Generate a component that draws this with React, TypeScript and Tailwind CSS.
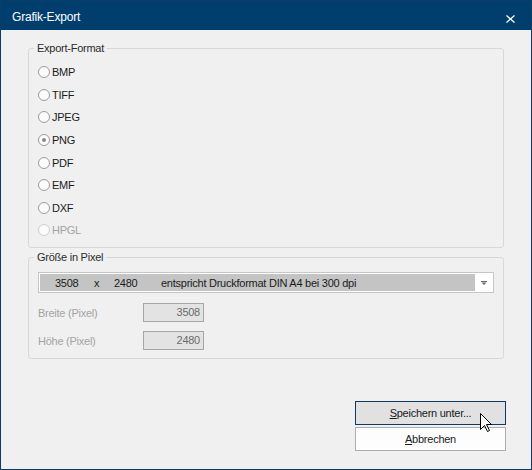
import React from 'react';

const formats = ['BMP', 'TIFF', 'JPEG', 'PNG', 'PDF', 'EMF', 'DXF', 'HPGL'];

const Radio: React.FC<{ label: string; checked?: boolean; disabled?: boolean }> = ({ label, checked, disabled }) => (
    <div className="h-[22.6px] flex items-center">
        <span
            className={`w-[12px] h-[12px] rounded-full border flex items-center justify-center bg-[#fbfbfb] ${
                disabled ? 'border-[#cfcfcf]' : 'border-[#9c9c9c]'
            }`}
        >
            {checked && <span className="w-[4px] h-[4px] rounded-full bg-[#8a8a8a]" />}
        </span>
        <span className={`ml-[2px] ${disabled ? 'text-[#a3a3a3]' : 'text-[#1b1b1b]'}`}>{label}</span>
    </div>
);

const App: React.FC = () => {
    return (
        <div className="w-[532px] h-[470px] relative bg-[#f0f0f0] border border-[#0c3d69] flex flex-col font-['Liberation_Sans',Arial,sans-serif] text-[11px] leading-[14px] tracking-[-0.25px] select-none">
            {/* title bar */}
            <div className="h-[29px] bg-[#003e6e] flex items-start justify-between pl-[11px] pr-[16px] pt-[9px] shrink-0">
                <span className="text-white text-[12px] tracking-[-0.2px]">Grafik-Export</span>
                <svg width="9" height="8" viewBox="0 0 9 8" className="mt-[5px]">
                    <path d="M0.5 0.5 L8.5 7.5 M8.5 0.5 L0.5 7.5" stroke="white" strokeWidth="1.3" />
                </svg>
            </div>

            <fieldset className="ml-[27px] mt-[11px] w-[476px] h-[207px] border border-[#d8d8d8] rounded-[3px] pl-[9px] pt-[6px]">
                <legend className="ml-[-4px] px-[3px] text-[#2b2b2b] leading-[14px]">Export-Format</legend>
                {formats.map(f => (
                    <Radio key={f} label={f} checked={f === 'PNG'} disabled={f === 'HPGL'} />
                ))}
            </fieldset>

            <fieldset className="ml-[27px] mt-[2px] w-[476px] h-[109px] border border-[#d8d8d8] rounded-[3px] pl-[9px] pt-[8px]">
                <legend className="ml-[-4px] px-[3px] text-[#2b2b2b] leading-[14px]">Größe in Pixel</legend>
                <div className="w-[456px] h-[21px] border border-[#c6c6c6] bg-white p-px flex">
                    <div className="flex-1 bg-[#c4c4c4] flex items-center pl-[15px] text-[#1b1b1b]">
                        <span className="w-[39px]">3508</span>
                        <span className="w-[20px]">x</span>
                        <span className="w-[47px]">2480</span>
                        <span>entspricht Druckformat DIN A4 bei 300 dpi</span>
                    </div>
                    <div className="w-[17px] flex items-center justify-center">
                        <svg width="6" height="4" viewBox="0 0 6 4">
                            <path d="M0 0 H6 V1 H0 Z M0.5 1.5 H5.5 L3 4 Z" fill="#6a6a6a" />
                        </svg>
                    </div>
                </div>
                <div className="mt-[10px] flex items-center">
                    <span className="w-[105px] text-[#a3a3a3]">Breite (Pixel)</span>
                    <div className="w-[61px] h-[19px] border border-[#a6a6a6] bg-[#e3e3e3] text-right pr-[3px] leading-[17px] text-[#6b6b6b]">3508</div>
                </div>
                <div className="mt-[9px] flex items-center">
                    <span className="w-[105px] text-[#a3a3a3]">Höhe (Pixel)</span>
                    <div className="w-[61px] h-[19px] border border-[#a6a6a6] bg-[#e3e3e3] text-right pr-[3px] leading-[17px] text-[#6b6b6b]">2480</div>
                </div>
            </fieldset>

            <div className="flex flex-col items-end pr-[25px] mt-[42px] gap-[2px]">
                <button className="w-[151px] h-[24px] border border-[#0d3a63] bg-[#e1e1e1] text-[#1b1b1b]">
                    <span className="underline">S</span>peichern unter...
                </button>
                <button className="w-[151px] h-[24px] border border-[#adadad] bg-[#fdfdfd] text-[#1b1b1b]">
                    <span className="underline">A</span>bbrechen
                </button>
            </div>

            {/* mouse cursor */}
            <svg width="13" height="20" viewBox="0 0 13 20" className="absolute left-[479px] top-[412px]">
                <path
                    d="M0.5 0.5 L0.5 16.5 L4.5 12.5 L7.5 18.5 L9.5 17.5 L6.5 11.5 L11.5 11.5 Z"
                    fill="white"
                    stroke="black"
                    strokeWidth="1"
                    strokeLinejoin="miter"
                />
            </svg>
        </div>
    );
};

export default App;
